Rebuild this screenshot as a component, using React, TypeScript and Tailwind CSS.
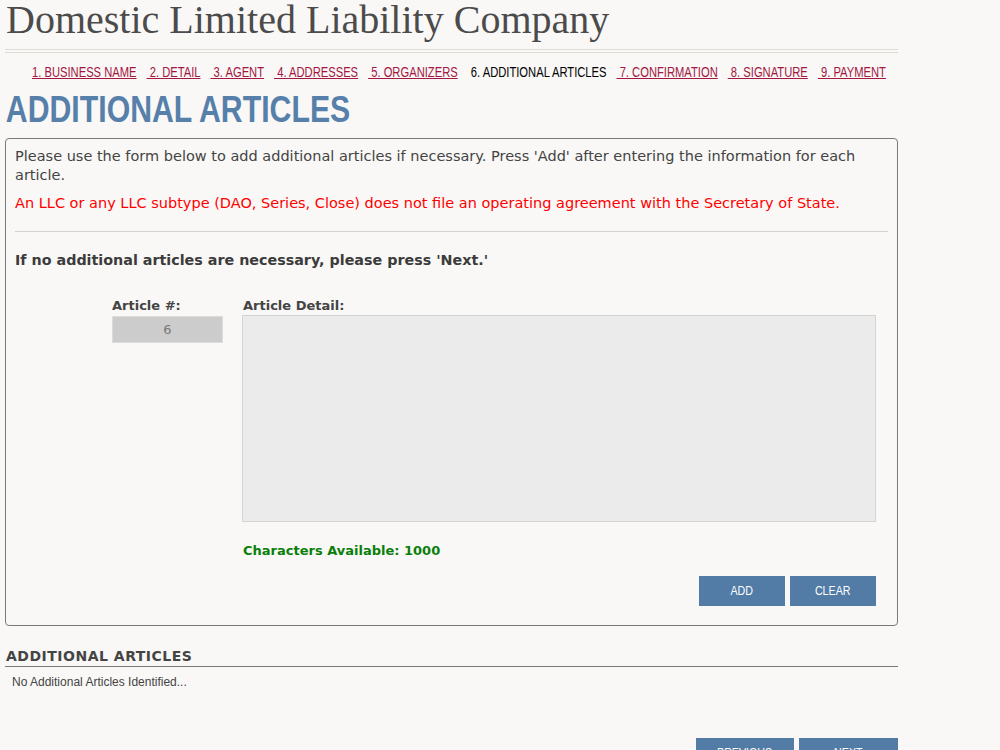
import React, { useState } from "react";

const STEPS = [
  "1. BUSINESS NAME",
  "2. DETAIL",
  "3. AGENT",
  "4. ADDRESSES",
  "5. ORGANIZERS",
  "6. ADDITIONAL ARTICLES",
  "7. CONFIRMATION",
  "8. SIGNATURE",
  "9. PAYMENT",
];
const CURRENT = 5;
const MAX_CHARS = 1000;

const arial = "font-['Liberation_Sans',Arial,sans-serif]";
const verdana = "font-['DejaVu_Sans','Verdana',sans-serif]";

// narrow caption used on the blue buttons
function BtnLabel({ children }: { children: React.ReactNode }) {
  return <span className="inline-block origin-center scale-x-[0.82]">{children}</span>;
}

export default function App() {
  const [detail, setDetail] = useState("");

  return (
    <div className="min-h-[750px] bg-[#f9f8f7] pl-[5px] pr-[102px]">
      <h1 className="pl-px font-['Liberation_Serif','Georgia',serif] text-[40px] leading-[40px] text-[#4b4b4b]">
        Domestic Limited Liability Company
      </h1>

      <div className="mt-[9px] h-[4px] border-y border-[#dedbd6]" />

      <div className="mt-[11px] pl-[27px]">
        <nav className={`flex w-max origin-left scale-x-[0.8] gap-[12.5px] whitespace-nowrap text-[14px] leading-4 ${arial}`}>
          {STEPS.map((s, i) =>
            i === CURRENT ? (
              <span key={s} className="text-black">
                {"\u00a0" + s}
              </span>
            ) : (
              <a key={s} href="#" className="text-[#a3163f] underline">
                {i === 0 ? s : "\u00a0" + s}
              </a>
            )
          )}
        </nav>
      </div>

      <h2 className={`mt-[10px] w-max origin-left scale-x-[0.84] pl-px text-[36px] font-bold leading-[40px] text-[#5680aa] ${arial}`}>
        ADDITIONAL ARTICLES
      </h2>

      <section className={`mt-[8px] rounded-[4px] border border-[#7a7a7a] px-[9px] pb-[19px] pt-[8px] ${verdana}`}>
        <p className="text-[14.5px] leading-[19px] text-[#444]">
          Please use the form below to add additional articles if necessary. Press 'Add' after entering the
          information for each article.
        </p>
        <p className="mt-[9px] text-[14.5px] leading-[19px] text-[#ff0000]">
          An LLC or any LLC subtype (DAO, Series, Close) does not file an operating agreement with the
          Secretary of State.
        </p>
        <hr className="mt-[18px] border-[#d2d2d2]" />
        <p className="mt-[18px] text-[14.3px] font-bold leading-[20px] text-[#3c3c3c]">
          If no additional articles are necessary, please press 'Next.'
        </p>

        <div className="mt-[27px] flex pl-[97px] pr-[12px]">
          <div className="w-[130px]">
            <div className="text-[13px] font-bold leading-[18px] text-[#444]">Article #:</div>
            <input
              readOnly
              value="6"
              className="mt-[1px] h-[27px] w-[111px] border border-[#dcdcdc] bg-[#cccccc] text-center text-[13px] text-[#777] outline-none"
            />
          </div>
          <div className="flex-1">
            <div className="pl-px text-[13px] font-bold leading-[18px] text-[#444]">Article Detail:</div>
            <textarea
              value={detail}
              maxLength={MAX_CHARS}
              onChange={(e) => setDetail(e.target.value)}
              className="block h-[207px] w-full resize-none border border-[#d4d4d4] bg-[#ebebeb] p-1 text-[13px] outline-none"
            />
            <div className="mt-[20px] pl-px text-[13px] font-bold leading-[18px] text-[#0a7f0a]">
              Characters Available: {MAX_CHARS - detail.length}
            </div>
            <div className={`mt-[16px] flex justify-end gap-[5px] ${arial}`}>
              <button className="h-[30px] w-[86px] bg-[#527ba6] text-[13px] text-white">
                <BtnLabel>ADD</BtnLabel>
              </button>
              <button
                onClick={() => setDetail("")}
                className="h-[30px] w-[86px] bg-[#527ba6] text-[13px] text-white"
              >
                <BtnLabel>CLEAR</BtnLabel>
              </button>
            </div>
          </div>
        </div>
      </section>

      <h3 className={`mt-[21px] border-b border-[#7a7a7a] pb-px pl-px text-[14px] font-bold leading-[18px] tracking-[0.5px] text-[#444] ${verdana}`}>
        ADDITIONAL ARTICLES
      </h3>
      <p className={`mt-[8px] pl-[7px] text-[12px] leading-[15px] text-[#444] ${arial}`}>
        No Additional Articles Identified...
      </p>

      <div className={`mt-[48px] flex justify-end gap-[5px] ${arial}`}>
        <button className="h-[30px] w-[98px] bg-[#527ba6] text-[13px] text-white">
          <BtnLabel>PREVIOUS</BtnLabel>
        </button>
        <button className="h-[30px] w-[99px] bg-[#527ba6] text-[13px] text-white">
          <BtnLabel>NEXT</BtnLabel>
        </button>
      </div>
    </div>
  );
}
